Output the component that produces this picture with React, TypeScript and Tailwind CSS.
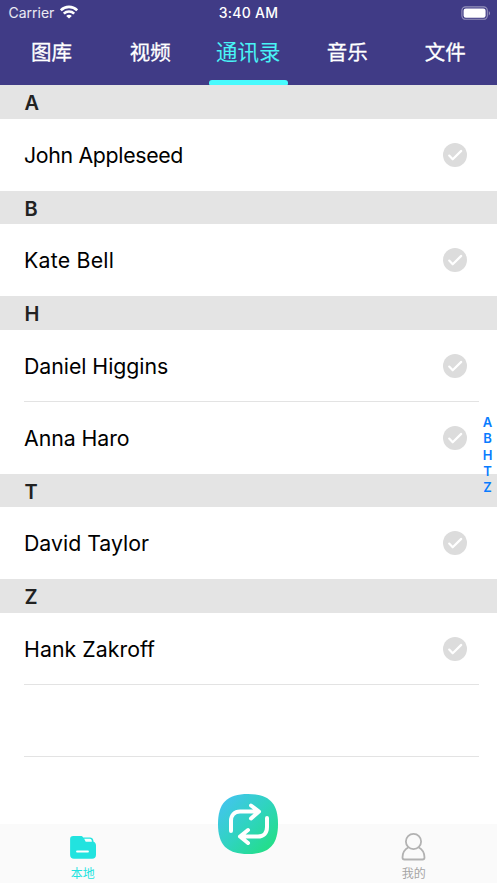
import React from "react";

type Section = { letter: string; names: { name: string; spacing: string }[] };

const sections: Section[] = [
  { letter: "A", names: [{ name: "John Appleseed", spacing: "tracking-[-0.32px]" }] },
  { letter: "B", names: [{ name: "Kate Bell", spacing: "tracking-[0.22px]" }] },
  {
    letter: "H",
    names: [
      { name: "Daniel Higgins", spacing: "tracking-[-0.04px]" },
      { name: "Anna Haro", spacing: "tracking-[-0.05px]" },
    ],
  },
  { letter: "T", names: [{ name: "David Taylor", spacing: "tracking-[0px]" }] },
  { letter: "Z", names: [{ name: "Hank Zakroff", spacing: "tracking-[0.05px]" }] },
];

const tabs = ["图库", "视频", "通讯录", "音乐", "文件"];

function StatusBar() {
  return (
    <div className="grid h-[26px] grid-cols-3 items-center text-[14px] leading-[26px] text-white">
      <div className="flex items-center gap-[6px] pl-[8.5px]">
        <span className="text-white/90">Carrier</span>
        <svg width="18" height="14" viewBox="0 0 18 14" className="-mt-[2px]" fill="none" stroke="white" strokeWidth="2.6">
          <path d="M.8 5.2C5.4.7 12.6.7 17.2 5.2" />
          <path d="M3.8 8.6c2.9-2.8 7.5-2.8 10.4 0" />
          <path d="M9 13.6 6.2 10.9c1.5-1.5 4.1-1.5 5.6 0Z" fill="white" stroke="none" />
        </svg>
      </div>
      <span className="text-center text-[14px] font-medium tracking-[0.25px]">3:40 AM</span>
      <div className="flex justify-end pr-[6px]">
        <svg width="30" height="14" viewBox="0 0 30 14" fill="none" className="-mt-px">
          <rect x=".9" y=".9" width="25.4" height="12.4" rx="3.6" stroke="white" strokeOpacity=".45" strokeWidth="1.1" />
          <rect x="2.6" y="2.5" width="22" height="9.2" rx="2.2" fill="white" />
          <path d="M27.8 5v4.4c1.5-.7 1.5-3.7 0-4.4Z" fill="white" fillOpacity=".5" />
        </svg>
      </div>
    </div>
  );
}

function Check() {
  return (
    <svg width="24" height="24" viewBox="0 0 24 24" fill="none">
      <circle cx="12" cy="12" r="12" fill="#dcdcdc" />
      <path d="m6.2 12.6 3.5 3.7 8.5-8.4" stroke="white" strokeWidth="2.2" strokeLinecap="round" strokeLinejoin="round" />
    </svg>
  );
}

export default function App() {
  return (
    <div className="relative flex h-[883px] w-[497px] flex-col overflow-hidden bg-white font-['Inter','Noto_Sans_CJK_SC',sans-serif]">
      <header className="flex h-[85.4px] shrink-0 flex-col bg-[#403b86]">
        <StatusBar />
        <nav className="grid flex-1 grid-cols-[103px_94.6px_101.4px_96.4px_1fr]">
          {tabs.map((tab, i) => (
            <div
              key={tab}
              className={
                i === 2
                  ? "flex flex-col items-center justify-between text-[21.5px] leading-[53px] text-[#48f3f6]"
                  : i === 4
                    ? "flex flex-col items-center pr-[2px] text-[20.5px] leading-[54px] text-white [-webkit-text-stroke:0.3px_white]"
                    : "flex flex-col items-center text-[20.5px] leading-[54px] text-white [-webkit-text-stroke:0.3px_white]"
              }
            >
              <span>{tab}</span>
              {i === 2 && <span className="h-[5px] w-[79px] rounded-t-[3px] rounded-b-[1px] bg-[#48fafd]" />}
            </div>
          ))}
        </nav>
      </header>

      <main className="flex flex-col">
        {sections.map((section) => (
          <section key={section.letter}>
            <h2 className="h-[33.5px] bg-[#e4e4e4] pl-[24.5px] text-[20px] leading-[36.5px] font-semibold text-[#222]">
              {section.letter}
            </h2>
            {section.names.map(({ name, spacing }, i) => (
              <div key={name} className="flex h-[72px] flex-col pl-6">
                <div className="flex h-[72px] shrink-0 items-center justify-between pr-[30px]">
                  <span className={`pt-[2px] text-[21.3px] text-black ${spacing}`}>{name}</span>
                  <Check />
                </div>
                {(i < section.names.length - 1 || section.letter === "Z") && (
                  <div className="-mt-px mr-[18px] h-px shrink-0 bg-[#e3e3e3]" />
                )}
              </div>
            ))}
          </section>
        ))}
        <div className="mr-[18px] ml-6 h-[72px] border-b border-[#e3e3e3]" />
      </main>

      <aside className="absolute top-[414px] right-0 flex w-[19px] flex-col items-center text-[13px] leading-[16.3px] font-semibold text-[#087cff]">
        {sections.map(({ letter }) => (
          <span key={letter}>{letter}</span>
        ))}
      </aside>

      <footer className="absolute inset-x-0 bottom-0 grid h-[59px] grid-cols-3 bg-[#fafafa] text-[12px] leading-[16px]">
        <div className="flex flex-col items-center pt-[11px] text-[#22e3df]">
          <svg width="28" height="26" viewBox="0 0 28 26" fill="none">
            <path d="M4.2 1h7.5c1.2 0 1.8.4 2.5 1.5h6.8c1.8 0 3 1 3.3 2.8l.3 1.5c1.6.6 2.4 1.8 2.4 3.800v9.200c0 2.500-1.400 3.900-3.900 3.900H5c-2.500 0-3.900-1.400-3.900-3.900V4.200C1.100 2.200 2.200 1 4.200 1Z" fill="#22e3df" />
            <path d="M15.200 3.800h5.600c1.300 0 2 .8 2.100 3h-5c-.9 0-1.300-.3-1.600-.9Z" fill="#f4fefe" />
            <path d="M8 16.500h11" stroke="white" strokeWidth="1.800" strokeLinecap="round" />
          </svg>
          <span className="mt-[5px]">本地</span>
        </div>
        <div className="flex justify-center">
          <svg width="60" height="60" viewBox="0 0 60 60" fill="none" className="-mt-[30px]">
            <defs>
              <linearGradient id="sync" x1="4" y1="8" x2="54" y2="56" gradientUnits="userSpaceOnUse">
                <stop stopColor="#42c5ec" />
                <stop offset=".5" stopColor="#2fd4be" />
                <stop offset="1" stopColor="#22df84" />
              </linearGradient>
            </defs>
            <path d="M30 0C51 0 60 9 60 30S51 60 30 60 0 51 0 30 9 0 30 0Z" fill="url(#sync)" />
            <g stroke="white" strokeWidth="4" strokeLinecap="round" strokeLinejoin="round">
              <path d="M13 37V27c0-5.500 3.500-9.500 9-9.500h18M33 11.500l8 6-8 7" />
              <path d="M49 24v9c0 6-3.500 9.500-9 9.500H22M30 36l-8 6.500 8 6.500" />
            </g>
          </svg>
        </div>
        <div className="flex flex-col items-center pt-[9px] text-[#a5a5a5]">
          <svg width="26" height="28" viewBox="0 0 26 28" fill="none" stroke="#b2b2b2" strokeWidth="1.8">
            <circle cx="12.5" cy="8.500" r="7.600" />
            <path d="M7.500 14.200C3.500 16.300 1.500 19.800 1.500 24.500c0 1.400.6 2 2 2h18c1.400 0 2-.6 2-2 0-4.700-2-8.200-6-10.300" />
          </svg>
          <span className="mt-[5px] pr-px">我的</span>
        </div>
      </footer>
    </div>
  );
}
